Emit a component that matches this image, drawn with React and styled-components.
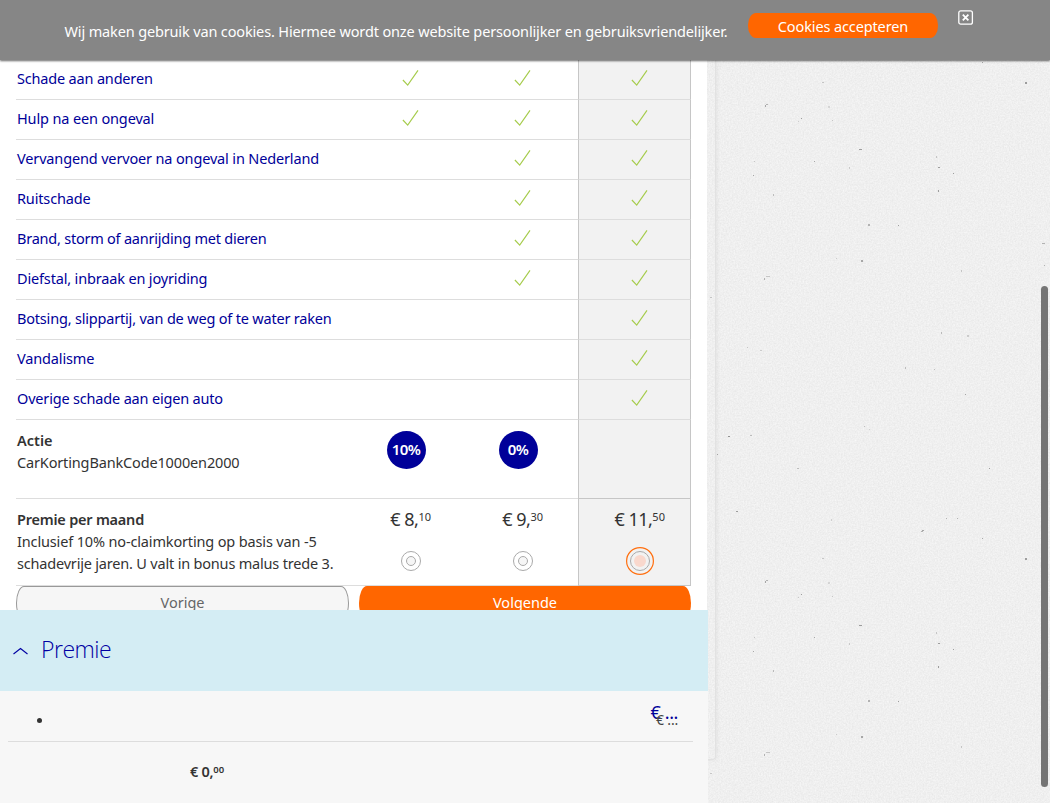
import React from 'react';
import styled, { createGlobalStyle } from 'styled-components';

const Global = createGlobalStyle`
  * { box-sizing: border-box; }
  html, body { margin: 0; height: 803px; overflow: hidden; background: #eee; }
  body { font-family: "Noto Sans", "Open Sans", sans-serif; font-size: 14.5px; line-height: 22px; color: #333; }
`;

const Page = styled.div`
  position: relative;
  width: 1050px;
  height: 803px;
  overflow: hidden;
`;
const Paper = styled.svg`
  position: absolute;
  inset: 0;
`;
const CookieBar = styled.header`
  position: relative;
  z-index: 3;
  height: 60px;
  display: flex;
  align-items: flex-start;
  padding-left: 64px;
  background: #868686;
  box-shadow: 0 1px 2px rgba(0, 0, 0, 0.6);
  color: #fff;
`;
const Text = styled.span`
  display: inline-block;
  white-space: nowrap;
  letter-spacing: ${p => p.$ls || 0}px;
`;
const CookieText = styled.div`
  width: 684px;
  padding: 20px 0 0 0.5px;
`;
const Accept = styled.button`
  width: 190px;
  height: 25px;
  margin-top: 13px;
  padding: 0;
  border: 0;
  border-radius: 8px / 12px;
  background: #ff6600;
  color: #fff;
  font: inherit;
  line-height: 26px;
`;
const Close = styled.svg`
  margin: 9px 0 0 20px;
`;
const Sheet = styled.main`
  position: relative;
  width: 716px;
  height: 700px;
  border-right: 1px solid #e2e2e2;
  border-bottom: 1px solid #e2e2e2;
  border-radius: 0 0 4px 0;
  box-shadow: 1px 0 4px rgba(0, 0, 0, 0.06);
`;
const Content = styled.section`
  width: 707px;
  height: 550px;
  padding-left: 16px;
  overflow: hidden;
  background: #fff;
`;
const Row = styled.div`
  display: grid;
  grid-template-columns: 338px 112px 112px 113px;
  width: 675px;
  height: ${p => p.$h || 40}px;
`;
const Label = styled.div`
  padding: ${p => p.$top || 7}px 0 0 1px;
  border-bottom: 1px solid #ddd;
  color: ${p => (p.$plain ? '#333' : '#000099')};
`;
const Strong = styled.strong`
  display: block;
  font-weight: 600;
  letter-spacing: ${p => p.$ls || 0}px;
`;
const Cell = styled.div`
  display: flex;
  flex-direction: column;
  align-items: center;
  padding-top: ${p => p.$top || 0}px;
  border-bottom: 1px solid #ddd;
  ${p => p.$selected && `
    padding-left: 9px;
    background: #f2f2f2;
    border-left: 1px solid #c6c6c6;
    border-right: 1px solid #c6c6c6;
  `}
  ${p => p.$strong && 'border-bottom-color: #c6c6c6;'}
`;
const CheckIcon = styled.svg`
  margin-top: 9px;
`;
const Badge = styled.div`
  width: 39px;
  height: 38px;
  margin-right: 7px;
  padding-right: 1px;
  border-radius: 50%;
  background: #000099;
  color: #fff;
  font-weight: 600;
  font-size: 15px;
  letter-spacing: -0.6px;
  line-height: 37px;
  text-align: center;
`;
const Price = styled.div`
  height: 22px;
  padding-left: 1.5px;
  font-size: 18px;
  letter-spacing: -0.5px;
  white-space: nowrap;
`;
const Cents = styled.span`
  position: relative;
  top: -5px;
  font-size: 11px;
  letter-spacing: 0.1px;
`;
const RadioIcon = styled.svg`
  margin: 16px 0 0 1px;
`;
const Actions = styled.div`
  display: grid;
  grid-template-columns: 333px 332px;
  gap: 10px;
  width: 675px;
`;
const Action = styled.button`
  height: 34px;
  padding: 0 0 2px;
  border: ${p => (p.$primary ? '0' : '1px solid #999')};
  border-radius: 8px / 17px;
  background: ${p => (p.$primary ? '#ff6600' : '#f6f6f6')};
  color: ${p => (p.$primary ? '#fff' : '#666')};
  font: inherit;
`;
const Panel = styled.aside`
  position: absolute;
  z-index: 2;
  left: 0;
  top: 610px;
  width: 708px;
  height: 193px;
  background: #f7f7f7;
`;
const PanelHead = styled.h2`
  display: flex;
  align-items: center;
  height: 81px;
  margin: 0;
  padding: 0 0 4px 13px;
  gap: 12px;
  background: #d4edf4;
  color: #0000a3;
  font: 300 23px/30px "Open Sans", "Noto Sans", sans-serif;
`;
const Chevron = styled.svg`
  margin-top: 4px;
`;
const Summary = styled.div`
  display: flex;
  justify-content: space-between;
  width: 685px;
  height: 51px;
  margin-left: 8px;
  padding: 27px 15px 0 29px;
  border-bottom: 1px solid #ddd;
`;
const Bullet = styled.i`
  width: 5px;
  height: 5px;
  border-radius: 50%;
  background: #333;
`;
const Amounts = styled.div`
  position: relative;
  width: 28px;
`;
const Amount = styled.span`
  position: absolute;
  right: 0;
  top: ${p => p.$top}px;
  color: ${p => p.$color};
  font-size: ${p => p.$size}px;
  line-height: 20px;
  letter-spacing: ${p => p.$ls}px;
  white-space: nowrap;
`;
const Total = styled.div`
  padding: 18px 0 0 190px;
  font-size: 14.5px;
  font-weight: 600;
  letter-spacing: -0.3px;
`;
const TotalCents = styled.span`
  position: relative;
  top: -4px;
  font-size: 9.5px;
  letter-spacing: 0.2px;
`;
const Scrollbar = styled.div`
  position: absolute;
  z-index: 4;
  left: 1041px;
  top: 286px;
  width: 7px;
  height: 501px;
  border-radius: 4px;
  background: #757575;
`;

// One tile of paper fibres: x, y, width, height, opacity. The tile repeats downwards.
const TILE = 476;
const specks = [
  [736, 35, 2, 1, 0.8], [922, 54, 2, 1, 0.7], [921, 55, 2, 1, 0.6], [946, 42, 1, 1, 0.6], [957, 42, 1, 1, 0.6],
  [831, 43, 1, 2, 0.3], [982, 62, 1, 1, 0.7], [1025, 82, 2, 2, 0.8], [822, 82, 2, 1, 0.4], [766, 104, 2, 1, 0.6],
  [765, 105, 1, 2, 0.7], [828, 106, 2, 2, 0.25], [801, 118, 1, 1, 0.8], [798, 121, 1, 1, 0.35], [832, 120, 1, 1, 0.4],
  [859, 149, 3, 1, 0.8], [936, 156, 1, 2, 0.4], [814, 161, 1, 1, 0.7], [754, 161, 1, 1, 0.4], [849, 167, 1, 2, 0.35],
  [938, 167, 2, 1, 0.8], [953, 173, 1, 1, 0.8], [753, 175, 1, 1, 0.7], [938, 190, 1, 2, 0.8], [773, 194, 1, 2, 0.5],
  [868, 224, 2, 2, 0.6], [898, 225, 1, 1, 0.8], [861, 260, 2, 2, 0.7], [836, 258, 1, 1, 0.35], [961, 270, 1, 2, 0.4],
  [766, 276, 4, 1, 0.4], [764, 278, 1, 2, 0.6], [1042, 243, 3, 1, 0.6], [1044, 265, 1, 1, 0.6], [710, 297, 2, 1, 0.4],
  [941, 332, 1, 2, 0.5], [967, 335, 2, 2, 0.35], [905, 367, 1, 2, 0.5], [934, 369, 1, 1, 0.5], [965, 394, 1, 1, 0.7],
  [747, 347, 1, 1, 0.4], [760, 350, 2, 1, 0.35], [728, 436, 2, 1, 0.9], [750, 435, 2, 1, 0.5], [717, 454, 1, 1, 0.7],
  [864, 426, 1, 1, 0.45], [869, 429, 1, 1, 0.3], [797, 468, 2, 1, 0.5], [989, 468, 1, 1, 0.8],
];

const Fibres = () => specks.map(([x, y, w, h, o]) => (
  <rect key={`${x}-${y}`} x={x} y={y} width={w} height={h} fill="#888" opacity={o} />
));

const Check = () => (
  <CheckIcon width="18" height="18" viewBox="0 0 18 18" fill="none">
    <path d="M1.9 11 6.7 16.2 17 1.3" stroke="#a6cc4c" strokeWidth="1.15" />
  </CheckIcon>
);

const Radio = ({ active }) => (
  <RadioIcon width="30" height="30" viewBox="0 0 30 30" fill="none">
    {active && <circle cx="15" cy="15" r="13.4" stroke="#ff6f0f" strokeWidth="1.2" />}
    <circle cx="15" cy="15" r="9.5" stroke="#aaa" />
    {active ? <circle cx="15" cy="15" r="6" fill="#f9d8cd" /> : <circle cx="15" cy="15" r="4.5" fill="#f6f6f6" stroke="#aaa" />}
  </RadioIcon>
);

const coverage = [
  ['Schade aan anderen', 3, -0.18],
  ['Hulp na een ongeval', 3, -0.14],
  ['Vervangend vervoer na ongeval in Nederland', 2, -0.15],
  ['Ruitschade', 2, -0.15],
  ['Brand, storm of aanrijding met dieren', 2, -0.23],
  ['Diefstal, inbraak en joyriding', 2, -0.16],
  ['Botsing, slippartij, van de weg of te water raken', 1, -0.19],
  ['Vandalisme', 1, -0.15],
  ['Overige schade aan eigen auto', 1, -0.18],
];
const prices = [['8', '10'], ['9', '30'], ['11', '50']];

export default function App() {
  return (
    <Page>
      <Global />
      <Paper width="1050" height="803">
        <filter id="grain" x="0" y="0" width="100%" height="100%" colorInterpolationFilters="sRGB">
          <feTurbulence type="fractalNoise" baseFrequency="0.65" numOctaves="3" seed="4" />
          <feColorMatrix values="0.08 0 0 0 0.898  0.08 0 0 0 0.898  0.08 0 0 0 0.898  0 0 0 0 1" />
        </filter>
        <rect width="1050" height="803" filter="url(#grain)" />
        <Fibres />
        <g transform={`translate(0 ${TILE})`}><Fibres /></g>
      </Paper>
      <CookieBar>
        <CookieText>
          <Text $ls={-0.145}>Wij maken gebruik van cookies. Hiermee wordt onze website persoonlijker en gebruiksvriendelijker.</Text>
        </CookieText>
        <Accept><Text $ls={-0.12}>Cookies accepteren</Text></Accept>
        <Close width="16" height="17" viewBox="0 0 16 17" fill="none" stroke="#fff">
          <rect x="0.8" y="1.8" width="13.6" height="13.4" rx="2" strokeWidth="1.3" />
          <path d="m4.8 5.7 5.6 5.6m0-5.6-5.6 5.6" strokeWidth="1.8" />
        </Close>
      </CookieBar>
      <Sheet>
        <Content>
          {coverage.map(([name, count, ls]) => (
            <Row key={name}>
              <Label><Text $ls={ls}>{name}</Text></Label>
              <Cell>{count > 2 && <Check />}</Cell>
              <Cell>{count > 1 && <Check />}</Cell>
              <Cell $selected><Check /></Cell>
            </Row>
          ))}
          <Row $h={79}>
            <Label $plain $top={9}>
              <Strong>Actie</Strong>
              <Text $ls={-0.15}>CarKortingBankCode1000en2000</Text>
            </Label>
            <Cell $top={11}><Badge>10%</Badge></Cell>
            <Cell $top={11}><Badge>0%</Badge></Cell>
            <Cell $selected $strong />
          </Row>
          <Row $h={87}>
            <Label $plain $top={9}>
              <Strong $ls={-0.22}>Premie per maand</Strong>
              <Text $ls={-0.15}>Inclusief 10% no-claimkorting op basis van -5</Text>
              <Text $ls={-0.19}>schadevrije jaren. U valt in bonus malus trede 3.</Text>
            </Label>
            {prices.map(([euros, cents], i) => (
              <Cell key={euros} $top={9} $selected={i === 2} $strong={i === 2}>
                <Price>€ {euros},<Cents>{cents}</Cents></Price>
                <Radio active={i === 2} />
              </Cell>
            ))}
          </Row>
          <Actions>
            <Action><Text>Vorige</Text></Action>
            <Action $primary><Text>Volgende</Text></Action>
          </Actions>
        </Content>
      </Sheet>
      <Panel>
        <PanelHead>
          <Chevron width="16" height="10" viewBox="0 0 16 10" fill="none" stroke="#0000a3" strokeWidth="1.1">
            <path d="m.5 8 7-5.5 7 5.5" />
          </Chevron>
          <Text $ls={-0.5}>Premie</Text>
        </PanelHead>
        <Summary>
          <Bullet />
          <Amounts>
            <Amount $top={-16} $color="#000099" $size={18} $ls={-0.4}>€ ...</Amount>
            <Amount $top={-8} $color="#444" $size={14} $ls={-0.2}>€ ...</Amount>
          </Amounts>
        </Summary>
        <Total>€ 0,<TotalCents>00</TotalCents></Total>
      </Panel>
      <Scrollbar />
    </Page>
  );
}
